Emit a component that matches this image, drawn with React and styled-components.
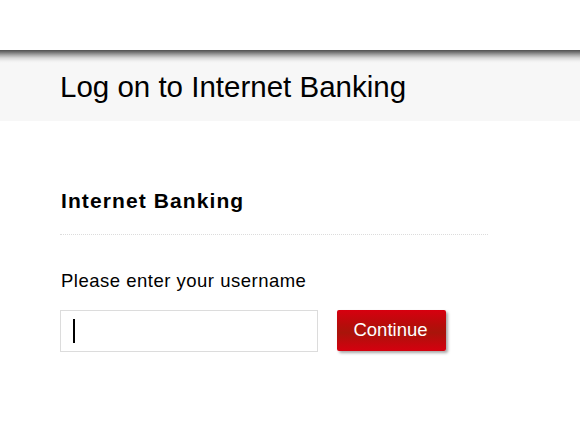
import React from "react";
import styled, { createGlobalStyle } from "styled-components";

const Global = createGlobalStyle`
  html, body { margin: 0; padding: 0; background: #fff; }
  body { font-family: "Liberation Sans", Arial, sans-serif; color: #000; }
`;

const Page = styled.div`
  display: flex;
  flex-direction: column;
  min-height: 441px;
`;

const TopSpace = styled.div`
  height: 50px;
  background: #fff;
`;

const Header = styled.header`
  height: 71px;
  box-sizing: border-box;
  padding: 20px 0 0 60px;
  background: linear-gradient(
    to bottom,
    #505050 0px,
    #707070 2px,
    #a8a8a8 5px,
    #d8d8d8 8px,
    #f0f0f0 11px,
    #f7f7f7 13px
  );
`;

const Title = styled.h1`
  margin: 0;
  font-size: 29.5px;
  line-height: 34px;
  font-weight: normal;
`;

const Main = styled.main`
  padding: 68px 0 0 61px;
  width: 427px;
`;

const SectionTitle = styled.h2`
  margin: 0 0 0 -1px;
  padding: 0 0 22px 1px;
  font-size: 21px;
  line-height: 23px;
  font-weight: bold;
  letter-spacing: 1.1px;
  border-bottom: 1px dotted #dcdcdc;
`;

const Label = styled.label`
  display: block;
  margin-top: 35px;
  font-size: 18.5px;
  line-height: 22px;
  letter-spacing: 0.5px;
`;

const Row = styled.div`
  display: flex;
  align-items: flex-start;
  gap: 19px;
  margin-top: 18px;
  margin-left: -1px;
`;

const Field = styled.div`
  position: relative;
  width: 258px;
  height: 42px;
`;

const Input = styled.input`
  box-sizing: border-box;
  width: 100%;
  height: 100%;
  border: 1px solid #dcdcdc;
  padding: 0 12px;
  font-family: "Liberation Sans", Arial, sans-serif;
  font-size: 18px;
  outline: none;
  caret-color: transparent;
  background: #fff;
`;

const Caret = styled.span`
  position: absolute;
  left: 13px;
  top: 9px;
  width: 2px;
  height: 24px;
  background: #000;
  pointer-events: none;
`;

const Button = styled.button`
  width: 109px;
  height: 41px;
  border: none;
  border-radius: 2px;
  color: #fff;
  font-family: "Liberation Sans", Arial, sans-serif;
  font-size: 18.5px;
  padding: 0 2px 2px 0;
  background: linear-gradient(
    to bottom,
    #d7000f 0%,
    #b80c0b 35%,
    #a9140a 55%,
    #c2080d 80%,
    #d6000f 100%
  );
  box-shadow: 2px 2px 3px rgba(0, 0, 0, 0.35);
  cursor: pointer;
`;

export default function App() {
  return (
    <>
      <Global />
      <Page>
        <TopSpace />
        <Header>
          <Title>Log on to Internet Banking</Title>
        </Header>
        <Main>
          <SectionTitle>Internet Banking</SectionTitle>
          <Label htmlFor="username">Please enter your username</Label>
          <Row>
            <Field>
              <Input id="username" type="text" />
              <Caret />
            </Field>
            <Button type="button">Continue</Button>
          </Row>
        </Main>
      </Page>
    </>
  );
}
